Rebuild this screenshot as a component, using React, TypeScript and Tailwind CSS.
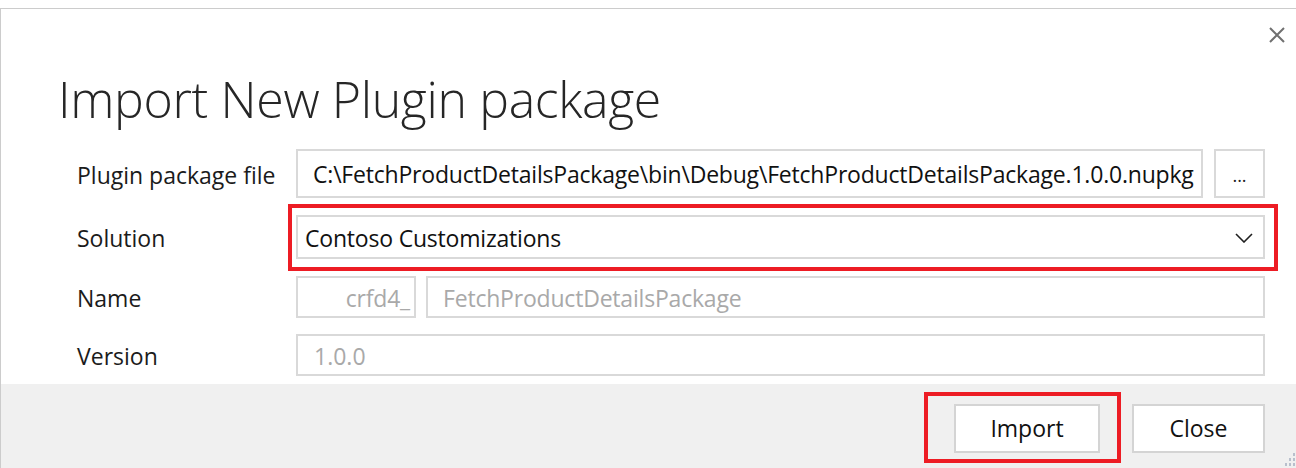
import React from "react";

const font = { fontFamily: '"Open Sans", "Noto Sans", sans-serif' };

function Label({ children }: { children: React.ReactNode }) {
    return <div className="w-[295px] shrink-0 pl-[76px] pt-[3px] text-[23px] text-[#1b1b1b] whitespace-nowrap">{children}</div>;
}

export default function App() {
    return (
        <div className="w-[1296px] h-[468px] overflow-hidden bg-white pt-[8px]" style={font}>
            <div className="relative h-[460px] border-l border-t border-[#cccccc] flex flex-col">
                {/* close */}
                <button className="absolute right-[11px] top-[18px] w-[16px] h-[16px] flex items-center justify-center">
                    <svg width="16" height="16" viewBox="0 0 16 16">
                        <path d="M1 1 L15 15 M15 1 L1 15" stroke="#707070" strokeWidth="2" fill="none" />
                    </svg>
                </button>

                <h1 className="ml-[57px] mt-[65px] text-[50px] leading-[50px] font-light text-[#262626] tracking-[-0.35px]">
                    Import New Plugin package
                </h1>

                <div className="flex flex-col mt-[25px] pr-[31px]">
                    {/* package file */}
                    <div className="flex items-center h-[49px]">
                        <Label>Plugin package file</Label>
                        <div className="flex-1 h-full border-2 border-[#d9d9d9] flex items-center pl-[15px] pt-[2px] text-[23px] text-[#111] whitespace-nowrap overflow-hidden tracking-[-0.2px]">
                            C:\FetchProductDetailsPackage\bin\Debug\FetchProductDetailsPackage.1.0.0.nupkg
                        </div>
                        <button className="ml-[11px] w-[51px] h-full border-2 border-[#d9d9d9] bg-white flex items-center justify-center pt-[4px] text-[18px] text-[#222]">
                            ...
                        </button>
                    </div>

                    {/* solution */}
                    <div className="flex items-center h-[44px] mt-[17px]">
                        <Label>Solution</Label>
                        <div className="relative flex-1 h-full border-2 border-[#d9d9d9] flex items-center justify-between pl-[7px] pr-[10px] pt-[2px] text-[23px] text-[#111] tracking-[-0.2px]">
                            <span>Contoso Customizations</span>
                            <svg width="18" height="10" viewBox="0 0 18 10">
                                <polyline points="1,1 9,9 17,1" stroke="#1f1f1f" strokeWidth="1.6" fill="none" />
                            </svg>
                            <div className="absolute -left-[10px] -top-[13px] -right-[15px] -bottom-[14px] border-4 border-[#ed1c24] pointer-events-none" />
                        </div>
                    </div>

                    {/* name */}
                    <div className="flex items-center h-[42px] mt-[17px]">
                        <Label>Name</Label>
                        <div className="w-[120px] h-full border-2 border-[#d9d9d9] flex items-center justify-end pr-[4px] pt-[2px] text-[23px] text-[#a9a9a9] tracking-[-0.2px]">
                            crfd4_
                        </div>
                        <div className="ml-[10px] flex-1 h-full border-2 border-[#d9d9d9] flex items-center pl-[15px] pt-[2px] text-[23px] text-[#a9a9a9] tracking-[-0.2px]">
                            FetchProductDetailsPackage
                        </div>
                    </div>

                    {/* version */}
                    <div className="flex items-center h-[42px] mt-[16px]">
                        <Label>Version</Label>
                        <div className="flex-1 h-full border-2 border-[#d9d9d9] flex items-center pl-[16px] pt-[2px] text-[23px] text-[#a9a9a9]">
                            1.0.0
                        </div>
                    </div>
                </div>

                {/* footer */}
                <div className="relative mt-[8px] flex-1 bg-[#f0f0f0] flex justify-end items-start pt-[20px] pr-[31px] gap-[32px]">
                    <div className="relative">
                        <button className="w-[146px] h-[49px] bg-white border-2 border-[#d4d4d4] text-[23px] text-[#111]">
                            Import
                        </button>
                        <div className="absolute -left-[30px] -top-[12px] -right-[21px] -bottom-[10px] border-4 border-[#ed1c24] pointer-events-none" />
                    </div>
                    <button className="w-[133px] h-[49px] bg-white border-2 border-[#d4d4d4] text-[23px] text-[#111]">
                        Close
                    </button>
                    <svg className="absolute right-0 bottom-0" width="16" height="20" viewBox="0 0 16 20">
                        <g fill="#b8bfcc">
                            <rect x="13" y="5" width="2" height="3" />
                            <rect x="9" y="10" width="2" height="3" />
                            <rect x="13" y="10" width="2" height="3" />
                            <rect x="5" y="15" width="2" height="3" />
                            <rect x="9" y="15" width="2" height="3" />
                            <rect x="13" y="15" width="2" height="3" />
                        </g>
                    </svg>
                </div>
            </div>
        </div>
    );
}
